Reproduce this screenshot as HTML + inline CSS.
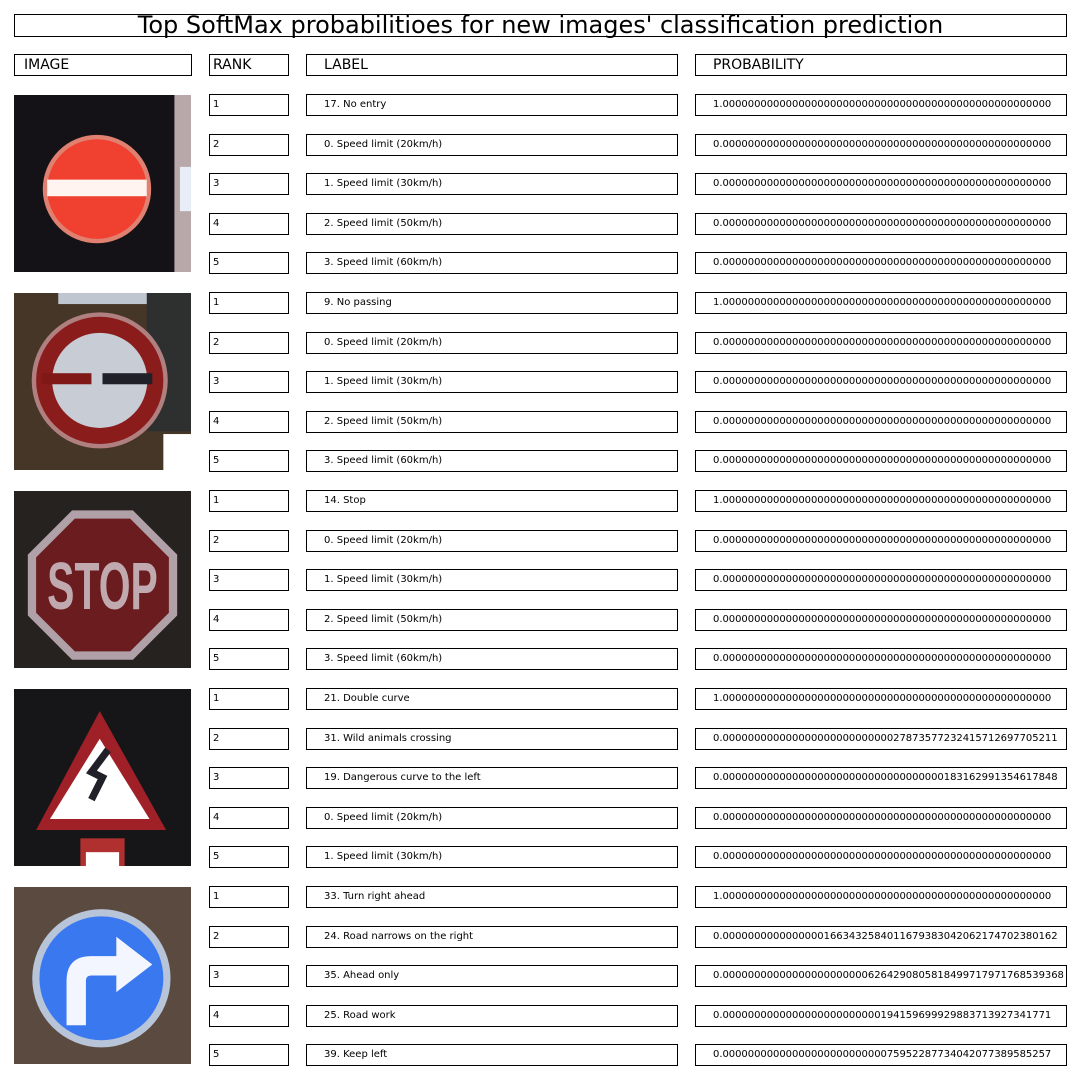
<!DOCTYPE html>
<html><head><meta charset="utf-8"><style>
body{margin:0;width:1080px;height:1080px;background:#fff;position:relative;overflow:hidden;font-family:"DejaVu Sans","Liberation Sans",sans-serif;color:#000}
.b{position:absolute;border:1px solid #000;box-sizing:border-box;height:22px;white-space:nowrap;overflow:visible}
.h{font-size:14px;line-height:20px}
.s{font-size:10px;line-height:20px}
.r{left:209px;width:80px;padding-left:3px}
.l{left:306px;width:372px;padding-left:17px}
.p{left:695px;width:372px;padding-left:17px;font-size:10px;letter-spacing:-0.04px}
svg{position:absolute;left:14px;width:177px;height:177px}
</style></head><body>
<div class="b" style="left:14px;top:14px;width:1053px;height:23px;font-size:24px;line-height:20px;text-align:center">Top SoftMax probabilitioes for new images' classification prediction</div>
<div class="b h" style="left:14px;top:54px;width:178px;padding-left:9px">IMAGE</div>
<div class="b h r" style="top:54px">RANK</div>
<div class="b h l" style="top:54px">LABEL</div>
<div class="b h p" style="top:54px;font-size:14px">PROBABILITY</div>

<svg viewBox="0 0 32 32" style="top:95px" preserveAspectRatio="none"><rect width="32" height="32" fill="#141216"/><rect x="29" y="0" width="3" height="32" fill="#b8a8aa"/><rect x="30" y="13" width="2" height="8" fill="#e8eef8"/><circle cx="15" cy="17" r="9.8" fill="#e08070"/><circle cx="15" cy="17" r="9" fill="#f04030"/><rect x="6" y="15.3" width="18" height="3" fill="#fff4f0"/></svg>
<svg viewBox="0 0 32 32" style="top:293px" preserveAspectRatio="none"><rect width="32" height="32" fill="#463628"/><rect x="24" y="0" width="8" height="25" fill="#2e3030"/><rect x="8" y="0" width="16" height="2" fill="#c0c6d0"/><circle cx="15.5" cy="15.8" r="12.3" fill="#b08080"/><circle cx="15.5" cy="15.8" r="11.5" fill="#8a1c1c"/><circle cx="15.5" cy="15.8" r="8.6" fill="#c8ccd4"/><rect x="5" y="14.5" width="9" height="2" fill="#801818"/><rect x="16" y="14.5" width="9" height="2" fill="#202028"/><rect x="27" y="25.5" width="5" height="6.5" fill="#fff"/></svg>
<svg viewBox="0 0 32 32" style="top:491px" preserveAspectRatio="none"><rect width="32" height="32" fill="#26221f"/><polygon points="10.5,3.5 21.5,3.5 29.5,11.5 29.5,22.5 21.5,30.5 10.5,30.5 2.5,22.5 2.5,11.5" fill="#b0a0a8"/><polygon points="11,5 21,5 28,12 28,22 21,29 11,29 4,22 4,12" fill="#6a1c1e"/><text x="16" y="0" transform="translate(0,21.3) scale(1,1.5)" font-size="8" text-anchor="middle" fill="#c0aab0" font-family="Liberation Sans Narrow,Liberation Sans,sans-serif" font-weight="bold" textLength="20" lengthAdjust="spacingAndGlyphs">STOP</text></svg>
<svg viewBox="0 0 32 32" style="top:689px" preserveAspectRatio="none"><rect width="32" height="32" fill="#161518"/><polygon points="15.5,4 27.5,25.5 4,25.5" fill="#a02028"/><polygon points="15.5,9 24.5,23.5 6.5,23.5" fill="#fff"/><path d="M17 11 L14 15 L16 16 L14 20" stroke="#202028" stroke-width="1.3" fill="none"/><rect x="12" y="27" width="8" height="5" fill="#b03030"/><rect x="13" y="29.5" width="6" height="2.5" fill="#fff"/></svg>
<svg viewBox="0 0 32 32" style="top:887px" preserveAspectRatio="none"><rect width="32" height="32" fill="#5a4a40"/><circle cx="15.8" cy="16.5" r="12.5" fill="#b8c4d8"/><circle cx="15.8" cy="16.5" r="11.2" fill="#3a78f0"/><path d="M9.5 25 L9.5 17 Q9.5 12.5 14 12.5 L18.5 12.5 L18.5 9 L25 14 L18.5 19 L18.5 16 L14 16 Q13 16 13 17 L13 25 Z" fill="#f4f6ff"/></svg>

<div class="b s r" style="top:94px">1</div><div class="b s l" style="top:94px">17. No entry</div><div class="b s p" style="top:94px">1.0000000000000000000000000000000000000000000000000000</div>
<div class="b s r" style="top:133.6px">2</div><div class="b s l" style="top:133.6px">0. Speed limit (20km/h)</div><div class="b s p" style="top:133.6px">0.0000000000000000000000000000000000000000000000000000</div>
<div class="b s r" style="top:173.2px">3</div><div class="b s l" style="top:173.2px">1. Speed limit (30km/h)</div><div class="b s p" style="top:173.2px">0.0000000000000000000000000000000000000000000000000000</div>
<div class="b s r" style="top:212.8px">4</div><div class="b s l" style="top:212.8px">2. Speed limit (50km/h)</div><div class="b s p" style="top:212.8px">0.0000000000000000000000000000000000000000000000000000</div>
<div class="b s r" style="top:252.4px">5</div><div class="b s l" style="top:252.4px">3. Speed limit (60km/h)</div><div class="b s p" style="top:252.4px">0.0000000000000000000000000000000000000000000000000000</div>

<div class="b s r" style="top:292px">1</div><div class="b s l" style="top:292px">9. No passing</div><div class="b s p" style="top:292px">1.0000000000000000000000000000000000000000000000000000</div>
<div class="b s r" style="top:331.6px">2</div><div class="b s l" style="top:331.6px">0. Speed limit (20km/h)</div><div class="b s p" style="top:331.6px">0.0000000000000000000000000000000000000000000000000000</div>
<div class="b s r" style="top:371.2px">3</div><div class="b s l" style="top:371.2px">1. Speed limit (30km/h)</div><div class="b s p" style="top:371.2px">0.0000000000000000000000000000000000000000000000000000</div>
<div class="b s r" style="top:410.8px">4</div><div class="b s l" style="top:410.8px">2. Speed limit (50km/h)</div><div class="b s p" style="top:410.8px">0.0000000000000000000000000000000000000000000000000000</div>
<div class="b s r" style="top:450.4px">5</div><div class="b s l" style="top:450.4px">3. Speed limit (60km/h)</div><div class="b s p" style="top:450.4px">0.0000000000000000000000000000000000000000000000000000</div>

<div class="b s r" style="top:490px">1</div><div class="b s l" style="top:490px">14. Stop</div><div class="b s p" style="top:490px">1.0000000000000000000000000000000000000000000000000000</div>
<div class="b s r" style="top:529.6px">2</div><div class="b s l" style="top:529.6px">0. Speed limit (20km/h)</div><div class="b s p" style="top:529.6px">0.0000000000000000000000000000000000000000000000000000</div>
<div class="b s r" style="top:569.2px">3</div><div class="b s l" style="top:569.2px">1. Speed limit (30km/h)</div><div class="b s p" style="top:569.2px">0.0000000000000000000000000000000000000000000000000000</div>
<div class="b s r" style="top:608.8px">4</div><div class="b s l" style="top:608.8px">2. Speed limit (50km/h)</div><div class="b s p" style="top:608.8px">0.0000000000000000000000000000000000000000000000000000</div>
<div class="b s r" style="top:648.4px">5</div><div class="b s l" style="top:648.4px">3. Speed limit (60km/h)</div><div class="b s p" style="top:648.4px">0.0000000000000000000000000000000000000000000000000000</div>

<div class="b s r" style="top:688px">1</div><div class="b s l" style="top:688px">21. Double curve</div><div class="b s p" style="top:688px">1.0000000000000000000000000000000000000000000000000000</div>
<div class="b s r" style="top:727.6px">2</div><div class="b s l" style="top:727.6px">31. Wild animals crossing</div><div class="b s p" style="top:727.6px">0.00000000000000000000000000027873577232415712697705211</div>
<div class="b s r" style="top:767.2px">3</div><div class="b s l" style="top:767.2px">19. Dangerous curve to the left</div><div class="b s p" style="top:767.2px">0.00000000000000000000000000000000000183162991354617848</div>
<div class="b s r" style="top:806.8px">4</div><div class="b s l" style="top:806.8px">0. Speed limit (20km/h)</div><div class="b s p" style="top:806.8px">0.0000000000000000000000000000000000000000000000000000</div>
<div class="b s r" style="top:846.4px">5</div><div class="b s l" style="top:846.4px">1. Speed limit (30km/h)</div><div class="b s p" style="top:846.4px">0.0000000000000000000000000000000000000000000000000000</div>

<div class="b s r" style="top:886px">1</div><div class="b s l" style="top:886px">33. Turn right ahead</div><div class="b s p" style="top:886px">1.0000000000000000000000000000000000000000000000000000</div>
<div class="b s r" style="top:925.6px">2</div><div class="b s l" style="top:925.6px">24. Road narrows on the right</div><div class="b s p" style="top:925.6px">0.00000000000000001663432584011679383042062174702380162</div>
<div class="b s r" style="top:965.2px">3</div><div class="b s l" style="top:965.2px">35. Ahead only</div><div class="b s p" style="top:965.2px">0.000000000000000000000006264290805818499717971768539368</div>
<div class="b s r" style="top:1004.8px">4</div><div class="b s l" style="top:1004.8px">25. Road work</div><div class="b s p" style="top:1004.8px">0.0000000000000000000000000194159699929883713927341771</div>
<div class="b s r" style="top:1044.4px">5</div><div class="b s l" style="top:1044.4px">39. Keep left</div><div class="b s p" style="top:1044.4px">0.0000000000000000000000000075952287734042077389585257</div>
</body></html>
